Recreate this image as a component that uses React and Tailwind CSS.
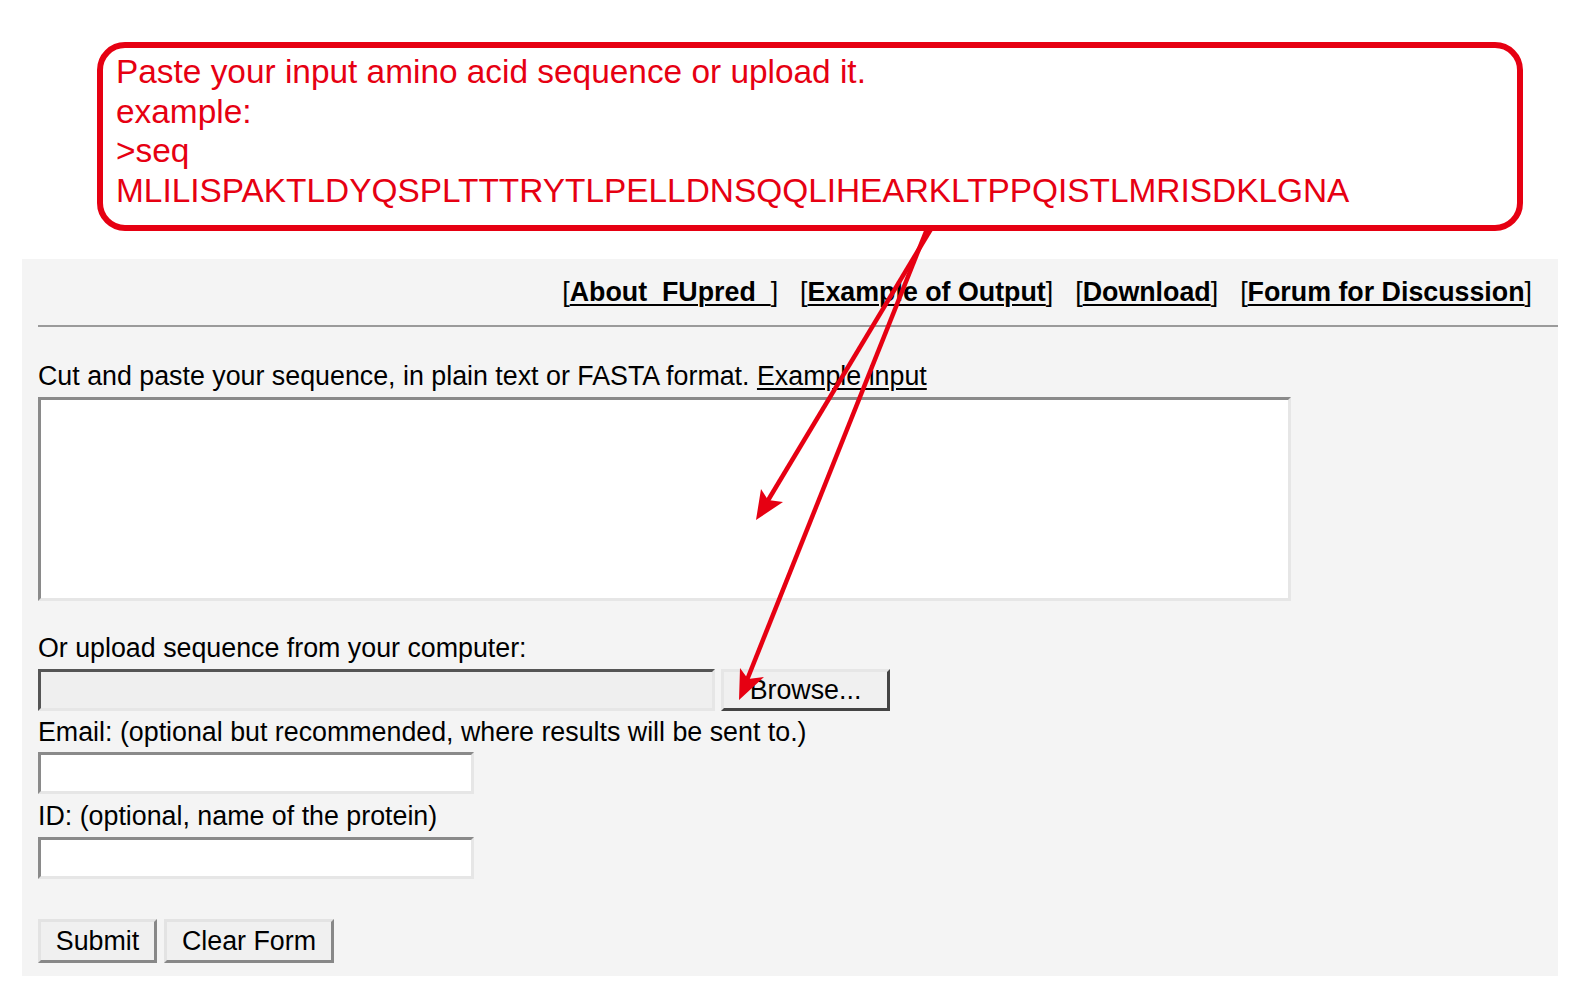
import React from 'react';

const font = { fontFamily: '"Liberation Sans", Arial, sans-serif' };

function NavLink({ children }) {
  return (
    <span className="whitespace-pre">
      [<a className="font-bold underline decoration-[2px] underline-offset-[3px]">{children}</a>]
    </span>
  );
}

function Arrows() {
  // red annotation arrows drawn over the form
  return (
    <svg
      className="absolute inset-0 pointer-events-none"
      width="1584"
      height="997"
      viewBox="0 0 1584 997"
    >
      <line x1="931" y1="229" x2="767" y2="502" stroke="#e60012" strokeWidth="4.5" />
      <polygon points="756,520 761,489 768,500 783,502" fill="#e60012" />
      <line x1="927" y1="229" x2="747" y2="680" stroke="#e60012" strokeWidth="4.5" />
      <polygon points="739,700 740,668 748,679 764,677" fill="#e60012" />
    </svg>
  );
}

export default function App() {
  return (
    <div className="relative w-[1584px] h-[997px] bg-white overflow-hidden text-black" style={font}>
      {/* Callout */}
      <div className="ml-[97px] mt-[42px] w-[1426px] h-[189px] border-[6px] border-[#e60012] rounded-[28px] pl-[13px] pt-[4px] text-[#e60012] text-[33.4px] leading-[39.7px]">
        <div>Paste your input amino acid sequence or upload it.</div>
        <div>example:</div>
        <div>&gt;seq</div>
        <div>MLILISPAKTLDYQSPLTTTRYTLPELLDNSQQLIHEARKLTPPQISTLMRISDKLGNA</div>
      </div>

      {/* Form panel */}
      <div className="ml-[22px] mt-[28px] w-[1536px] h-[717px] bg-[#f4f4f4] text-[26.8px] leading-[30px]">
        <div className="flex justify-end gap-[22px] pr-[26px] pt-[18px]">
          <NavLink>{'About\u00a0 FUpred\u00a0\u00a0'}</NavLink>
          <NavLink>Example of Output</NavLink>
          <NavLink>Download</NavLink>
          <NavLink>Forum for Discussion</NavLink>
        </div>
        <div className="ml-[16px] mt-[18px] h-[2px] bg-[#9a9a9a]" />

        <div className="pl-[16px]">
          <div className="mt-[34px]">
            Cut and paste your sequence, in plain text or FASTA format.{' '}
            <a className="underline underline-offset-[3px]">Example input</a>
          </div>
          <textarea
            className="block mt-[6px] w-[1253px] h-[204px] resize-none bg-white border-[3px] border-t-[#8a8a8a] border-l-[#8a8a8a] border-b-[#e6e6e6] border-r-[#e6e6e6] outline-none"
          />

          <div className="mt-[32px]">Or upload sequence from your computer:</div>
          <div className="flex mt-[6px] h-[42px] gap-[6px]">
            <div className="w-[677px] h-full bg-[#efefef] border-[3px] border-t-[#555] border-l-[#555] border-b-[#e6e6e6] border-r-[#e6e6e6]" />
            <button className="w-[169px] h-full bg-[#f0f0f0] border-[3px] border-t-[#e6e6e6] border-l-[#e6e6e6] border-b-[#444] border-r-[#444] text-[26.8px] leading-none">
              Browse...
            </button>
          </div>

          <div className="mt-[6px]">Email: (optional but recommended, where results will be sent to.)</div>
          <input
            className="block mt-[5px] w-[436px] h-[42px] bg-white border-[3px] border-t-[#8a8a8a] border-l-[#8a8a8a] border-b-[#e6e6e6] border-r-[#e6e6e6] outline-none"
          />

          <div className="mt-[7px]">ID: (optional, name of the protein)</div>
          <input
            className="block mt-[6px] w-[436px] h-[42px] bg-white border-[3px] border-t-[#8a8a8a] border-l-[#8a8a8a] border-b-[#e6e6e6] border-r-[#e6e6e6] outline-none"
          />

          <div className="flex gap-[7px] mt-[40px]">
            <button className="w-[119px] h-[44px] bg-[#f0f0f0] border-[3px] border-t-[#e3e3e3] border-l-[#e3e3e3] border-b-[#888] border-r-[#888] text-[26.8px] leading-none">
              Submit
            </button>
            <button className="w-[170px] h-[44px] bg-[#f0f0f0] border-[3px] border-t-[#e3e3e3] border-l-[#e3e3e3] border-b-[#888] border-r-[#888] text-[26.8px] leading-none">
              Clear Form
            </button>
          </div>
        </div>
      </div>

      <Arrows />
    </div>
  );
}
